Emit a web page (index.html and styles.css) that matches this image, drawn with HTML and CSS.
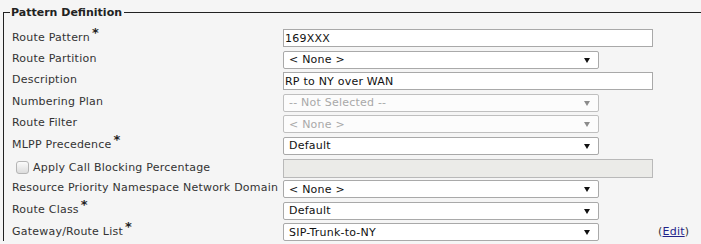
FILE: index.html
```html
<!DOCTYPE html>
<html>
<head>
<meta charset="utf-8">
<link rel="stylesheet" href="styles.css">
</head>
<body>
<fieldset class="panel">
  <legend class="legend">Pattern Definition</legend>
  <div class="form">
    <div class="lbl">Route Pattern<span class="req">*</span></div>
    <div class="ctl"><input class="txt" type="text" value="169XXX"></div>
    <div class="extra"></div>

    <div class="lbl">Route Partition</div>
    <div class="ctl"><div class="sel"><select><option>&lt; None &gt;</option></select></div></div>
    <div class="extra"></div>

    <div class="lbl">Description</div>
    <div class="ctl"><input class="txt" type="text" value="RP to NY over WAN"></div>
    <div class="extra"></div>

    <div class="lbl">Numbering Plan</div>
    <div class="ctl"><div class="sel dis"><select disabled><option>-- Not Selected --</option></select></div></div>
    <div class="extra"></div>

    <div class="lbl">Route Filter</div>
    <div class="ctl"><div class="sel dis"><select disabled><option>&lt; None &gt;</option></select></div></div>
    <div class="extra"></div>

    <div class="lbl">MLPP Precedence<span class="req">*</span></div>
    <div class="ctl"><div class="sel"><select><option>Default</option></select></div></div>
    <div class="extra"></div>

    <label class="lbl chk"><input class="cb" type="checkbox">Apply Call Blocking Percentage</label>
    <div class="ctl"><input class="txt off" type="text" disabled></div>
    <div class="extra"></div>

    <div class="lbl">Resource Priority Namespace Network Domain</div>
    <div class="ctl"><div class="sel"><select><option>&lt; None &gt;</option></select></div></div>
    <div class="extra"></div>

    <div class="lbl">Route Class<span class="req">*</span></div>
    <div class="ctl"><div class="sel"><select><option>Default</option></select></div></div>
    <div class="extra"></div>

    <div class="lbl">Gateway/Route List<span class="req">*</span></div>
    <div class="ctl"><div class="sel"><select><option>SIP-Trunk-to-NY</option></select></div></div>
    <div class="extra">(<a href="#" class="edit">Edit</a>)</div>
  </div>
</fieldset>
</body>
</html>
```

FILE: styles.css
```css
html, body {
  margin: 0;
  padding: 0;
  background: #f5f5f5;
  font-family: "DejaVu Sans", Verdana, sans-serif;
  font-size: 11px;
  color: #333;
  overflow: hidden;
}

.panel {
  margin: 6px 0 0 3px;
  padding: 0;
  border-style: solid;
  border-color: #222;
  border-width: 1px 0 0 1px;
  min-width: 0;
}

.legend {
  margin-left: 6px;
  padding: 0 2px 0 1px;
  font-weight: bold;
  font-size: 11px;
  color: #222;
}

.form {
  display: grid;
  grid-template-columns: 271px 370px auto;
  grid-auto-rows: 18px;
  row-gap: 3.6px;
  padding: 10px 0 0 8px;
  align-items: center;
  letter-spacing: 0.22px;
}

.lbl {
  white-space: nowrap;
  line-height: 14px;
  margin-top: -2px;
}

.req {
  font-weight: bold;
  font-size: 13px;
  position: relative;
  top: -4px;
  margin-left: 2px;
  color: #222;
}

.chk {
  display: flex;
  align-items: center;
  margin-left: 4px;
  margin-top: 0;
}

.cb {
  appearance: none;
  -webkit-appearance: none;
  width: 13px;
  height: 13px;
  margin: 0 4px 0 0;
  border: 1px solid #b5b5b5;
  border-radius: 3px;
  background: linear-gradient(#fbfbfb, #dcdcdc);
  box-sizing: border-box;
}

.ctl {
  height: 18px;
}

.txt {
  box-sizing: border-box;
  width: 370px;
  height: 18px;
  margin: 0;
  padding: 0 1px;
  border: 1px solid #a9a9a9;
  background: #fff;
  font-family: "DejaVu Sans", Verdana, sans-serif;
  font-size: 11px;
  letter-spacing: 0.22px;
  color: #111;
  outline: none;
}

.txt.off {
  height: 19px;
  background: #ebebe8;
  border-color: #b9b9b9;
}

.sel {
  position: relative;
  width: 316px;
  height: 18px;
}

.sel select {
  appearance: none;
  -webkit-appearance: none;
  box-sizing: border-box;
  width: 316px;
  height: 18px;
  margin: 0;
  padding: 0 0 0 5px;
  border: 1px solid #a9a9a9;
  border-radius: 2px;
  background: #fff;
  font-family: "DejaVu Sans", Verdana, sans-serif;
  font-size: 11px;
  letter-spacing: 0.22px;
  color: #111;
  outline: none;
}

.sel::after {
  content: "";
  position: absolute;
  right: 9px;
  top: 7px;
  border-left: 3px solid transparent;
  border-right: 3px solid transparent;
  border-top: 5px solid #111;
}

.sel.dis select {
  color: #888;
  background: #fff;
}

.sel.dis::after {
  border-top-color: #8c8c8c;
}

.extra {
  padding-left: 5px;
  white-space: nowrap;
  color: #333;
  margin-top: -1px;
}

.edit {
  color: #22238a;
  text-decoration: underline;
}
```
